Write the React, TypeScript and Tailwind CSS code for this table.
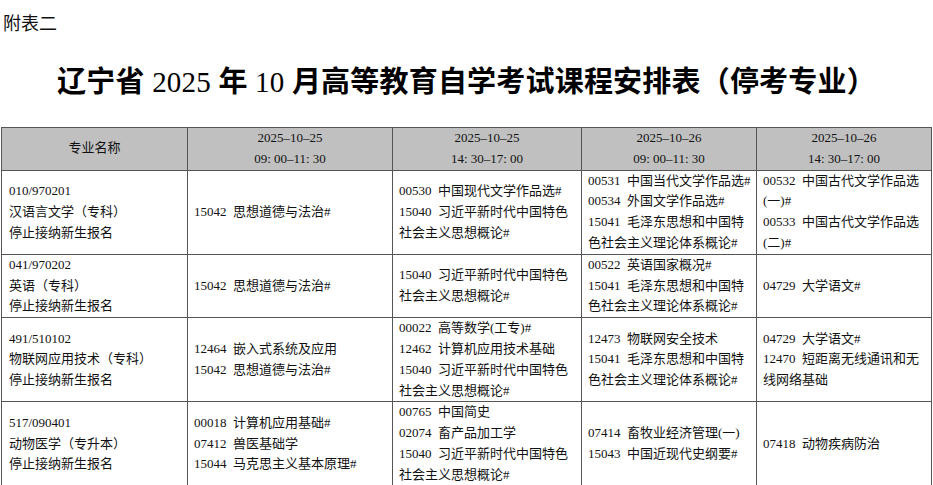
import React from "react";

const headers = [
  ["2025–10–25", "09: 00–11: 30"],
  ["2025–10–25", "14: 30–17: 00"],
  ["2025–10–26", "09: 00–11: 30"],
  ["2025–10–26", "14: 30–17: 00"],
];

// each cell is a list of visual lines
const rows: { major: string[]; cells: string[][] }[] = [
  {
    major: ["010/970201", "汉语言文学（专科）", "停止接纳新生报名"],
    cells: [
      ["15042  思想道德与法治#"],
      ["00530  中国现代文学作品选#", "15040  习近平新时代中国特色", "社会主义思想概论#"],
      ["00531  中国当代文学作品选#", "00534  外国文学作品选#", "15041  毛泽东思想和中国特", "色社会主义理论体系概论#"],
      ["00532  中国古代文学作品选", "(一)#", "00533  中国古代文学作品选", "(二)#"],
    ],
  },
  {
    major: ["041/970202", "英语（专科）", "停止接纳新生报名"],
    cells: [
      ["15042  思想道德与法治#"],
      ["15040  习近平新时代中国特色", "社会主义思想概论#"],
      ["00522  英语国家概况#", "15041  毛泽东思想和中国特", "色社会主义理论体系概论#"],
      ["04729  大学语文#"],
    ],
  },
  {
    major: ["491/510102", "物联网应用技术（专科）", "停止接纳新生报名"],
    cells: [
      ["12464  嵌入式系统及应用", "15042  思想道德与法治#"],
      ["00022  高等数学(工专)#", "12462  计算机应用技术基础", "15040  习近平新时代中国特色", "社会主义思想概论#"],
      ["12473  物联网安全技术", "15041  毛泽东思想和中国特", "色社会主义理论体系概论#"],
      ["04729  大学语文#", "12470  短距离无线通讯和无", "线网络基础"],
    ],
  },
  {
    major: ["517/090401", "动物医学（专升本）", "停止接纳新生报名"],
    cells: [
      ["00018  计算机应用基础#", "07412  兽医基础学", "15044  马克思主义基本原理#"],
      ["00765  中国简史", "02074  畜产品加工学", "15040  习近平新时代中国特色", "社会主义思想概论#"],
      ["07414  畜牧业经济管理(一)", "15043  中国近现代史纲要#"],
      ["07418  动物疾病防治"],
    ],
  },
];

const colWidths = ["w-[186px]", "w-[205px]", "w-[189px]", "w-[175px]", "w-[175px]"];

const Lines = ({ lines }: { lines: string[] }) => (
  <>
    {lines.map((l, i) => (
      <div key={i} className="whitespace-pre">
        {l}
      </div>
    ))}
  </>
);

export default function App() {
  return (
    <div className="w-[933px] h-[485px] bg-white text-[#111] overflow-hidden">
      {/* 页眉 */}
      <div className="pl-[3px] pt-[10px] text-[18px] leading-[24px] font-['Noto_Sans_CJK_SC',sans-serif]">
        附表二
      </div>

      {/* 标题：数字用常规字重 */}
      <h1 className="mt-[28px] text-center text-[29px] leading-[40px] font-bold text-black font-['Liberation_Serif','Noto_Sans_CJK_SC',serif] tracking-[0.2px]">
        辽宁省<span className="font-normal"> 2025 </span>年<span className="font-normal"> 10 </span>月高等教育自学考试课程安排表（停考专业）
      </h1>

      {/* 课程表 */}
      <table className="mt-[25px] ml-[1px] table-fixed border-collapse text-[13px] leading-[20.8px] font-['Liberation_Serif','Noto_Sans_CJK_SC',serif]">
        <colgroup>
          {colWidths.map((w, i) => (
            <col key={i} className={w} />
          ))}
        </colgroup>
        <thead>
          <tr className="bg-[#c0c0c0]">
            <th className="border border-[#555] font-normal text-center align-middle">专业名称</th>
            {headers.map((h, i) => (
              <th key={i} className="border border-[#555] font-normal text-center align-middle">
                <Lines lines={h} />
              </th>
            ))}
          </tr>
        </thead>
        <tbody>
          {rows.map((r, i) => (
            <tr key={i}>
              <td className="border border-[#555] align-middle pl-[7px]">
                <Lines lines={r.major} />
              </td>
              {r.cells.map((c, j) => (
                <td key={j} className="border border-[#555] align-middle pl-[6px]">
                  <Lines lines={c} />
                </td>
              ))}
            </tr>
          ))}
        </tbody>
      </table>
    </div>
  );
}
